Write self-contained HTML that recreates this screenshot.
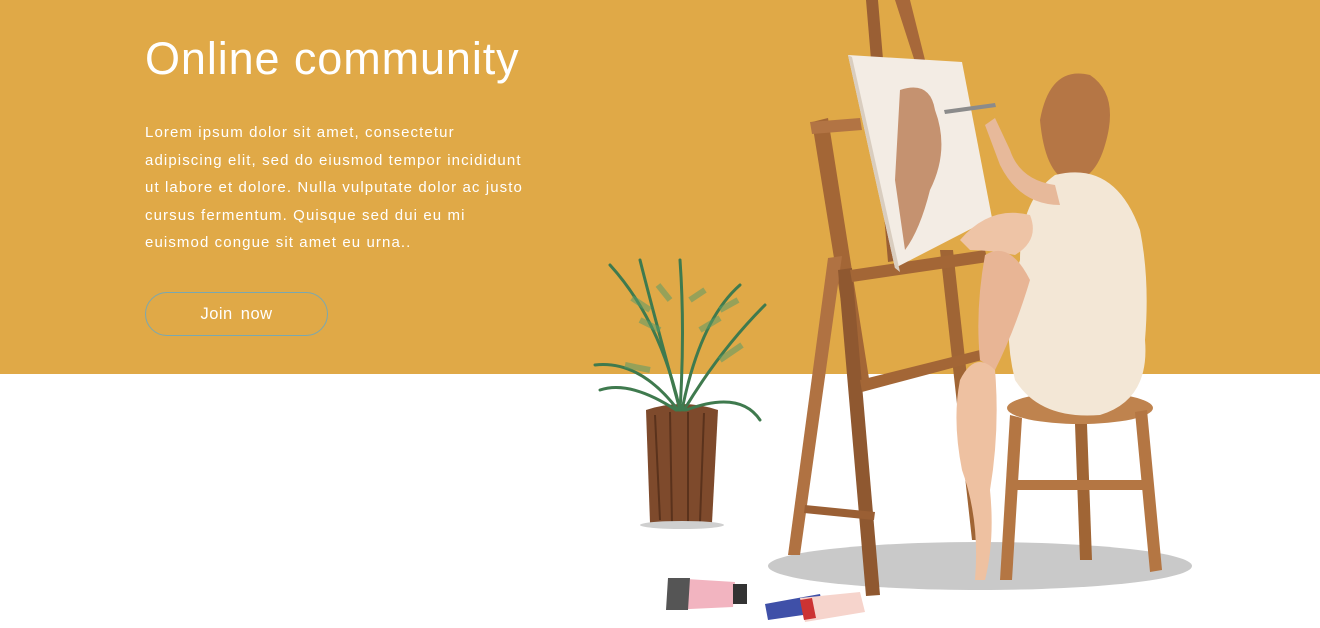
<!DOCTYPE html>
<html><head><meta charset="utf-8"><style>
html,body{margin:0;padding:0;width:1320px;height:628px;overflow:hidden;background:#fff;font-family:"Liberation Sans",sans-serif}
.top{position:absolute;left:0;top:0;width:1320px;height:374px;background:#E0A947}
h1{position:absolute;left:145px;top:33px;margin:0;font-weight:normal;font-size:45px;color:#fff;letter-spacing:0.9px;white-space:nowrap}
p{position:absolute;left:145px;top:119px;margin:0;font-size:15px;line-height:27.5px;color:#fff;letter-spacing:1.1px;white-space:nowrap}
.btn{position:absolute;left:145px;top:292px;width:181px;height:42px;border:1.5px solid #7aa8b0;border-radius:22px;color:#fff;font-size:16.5px;text-align:center;line-height:42px;letter-spacing:0.5px;word-spacing:3px}
svg{position:absolute;left:0;top:0}
</style></head><body>
<div class="top"></div>
<h1>Online community</h1>
<p>Lorem ipsum dolor sit amet, consectetur<br>adipiscing elit, sed do eiusmod tempor incididunt<br>ut labore et dolore. Nulla vulputate dolor ac justo<br>cursus fermentum. Quisque sed dui eu mi<br>euismod congue sit amet eu urna..</p>
<div class="btn">Join now</div>
<svg width="1320" height="628" viewBox="0 0 1320 628">
<ellipse cx="980" cy="566" rx="212" ry="24" fill="#c9c9c9"/>
<path d="M866 0 L878 0 L900 260 L888 262Z" fill="#9a5f34"/>
<path d="M895 0 L910 0 L925 60 L915 62Z" fill="#a7683a"/>
<path d="M812 122 L828 118 L870 385 L855 388Z" fill="#a36636"/>
<path d="M828 258 L842 256 L800 555 L788 555Z" fill="#b07242"/>
<path d="M838 270 L852 268 L880 595 L866 596Z" fill="#8f5830"/>
<path d="M940 250 L953 250 L985 540 L972 540Z" fill="#a06535"/>
<path d="M810 122 L860 118 L862 130 L812 134Z" fill="#b27444"/>
<path d="M850 270 L985 250 L988 262 L852 282Z" fill="#a36636"/>
<path d="M860 380 L980 350 L982 360 L862 392Z" fill="#a36636"/>
<path d="M805 505 L875 512 L874 520 L804 513Z" fill="#9a5f34"/>
<path d="M848 55 L962 62 L992 218 L895 268 Z" fill="#f3ece4"/>
<path d="M900 90 Q930 80 935 110 Q950 150 930 190 Q920 230 905 250 L895 180 Z" fill="#b97c52" opacity="0.8"/>
<path d="M848 55 L895 268 L900 272 L852 57Z" fill="#d9cdbf"/>
<ellipse cx="1080" cy="408" rx="73" ry="16" fill="#bf834e"/>
<path d="M1010 415 L1022 418 L1012 580 L1000 580Z" fill="#b47643"/>
<path d="M1135 412 L1147 410 L1162 570 L1150 572Z" fill="#b47643"/>
<path d="M1075 424 L1087 424 L1092 560 L1080 560Z" fill="#a06535"/>
<path d="M1015 480 L1150 480 L1150 490 L1015 490Z" fill="#b47643"/>
<path d="M1040 120 Q1050 65 1090 75 Q1120 95 1105 145 Q1095 180 1070 182 Q1045 175 1040 120Z" fill="#b57645"/>
<path d="M1055 175 Q1115 160 1140 230 Q1150 280 1145 340 Q1150 400 1100 415 Q1040 420 1015 380 Q1000 320 1020 260 Q1020 200 1055 175Z" fill="#f3e7d6"/>
<path d="M1055 185 Q1020 180 1010 150 L995 118 L985 125 L1000 165 Q1020 205 1060 205Z" fill="#e7b99a"/>
<path d="M960 240 Q990 205 1030 215 Q1040 240 1015 255 Q990 250 970 250Z" fill="#eec4a6"/>
<path d="M985 255 Q1010 240 1030 280 Q1015 330 995 370 L980 360 Q975 310 985 255Z" fill="#e8b595"/>
<path d="M960 380 Q975 350 995 370 Q1000 430 990 490 Q995 540 985 580 L975 580 Q980 520 962 470 Q952 420 960 380Z" fill="#eec1a1"/>
<path d="M944 110 L995 103 L996 107 L945 114Z" fill="#8b8b8b"/>
<path d="M646 410 Q682 398 718 410 L712 523 Q680 530 650 523Z" fill="#7e4a2c"/>
<path d="M655 415 L660 520 M670 412 L672 525 M688 412 L688 526 M704 413 L700 522" stroke="#5a321c" stroke-width="2"/>
<ellipse cx="682" cy="525" rx="42" ry="4" fill="#cfcfcf"/>
<g stroke="#3f7a4e" stroke-width="3" fill="none" stroke-linecap="round">
<path d="M680 410 Q660 320 610 265"/><path d="M682 410 Q700 320 740 285"/>
<path d="M678 410 Q640 360 595 365"/><path d="M684 410 Q720 350 765 305"/>
<path d="M680 410 Q685 330 680 260"/><path d="M676 410 Q630 380 600 390"/>
<path d="M686 410 Q740 390 760 420"/><path d="M680 410 Q650 300 640 260"/>
</g>
<g stroke="#5a9a67" stroke-width="6" fill="none" opacity="0.55">
<path d="M660 330 l-20 -10 M650 310 l-18 -12 M700 330 l20 -12 M720 310 l18 -10 M650 370 l-25 -5 M720 360 l22 -15 M690 300 l15 -10 M670 300 l-12 -15"/>
</g>
<path d="M670 578 L735 582 L733 607 L668 610Z" fill="#f2b4c0"/>
<rect x="733" y="584" width="14" height="20" fill="#333"/>
<path d="M668 578 L690 578 L688 610 L666 610Z" fill="#555"/>
<path d="M765 604 L820 594 L824 612 L768 620Z" fill="#3f50a8"/>
<path d="M800 598 L860 592 L865 612 L805 622Z" fill="#f6d4cc"/>
<path d="M800 600 L812 598 L816 618 L804 620Z" fill="#c33"/>
</svg>
</body></html>
